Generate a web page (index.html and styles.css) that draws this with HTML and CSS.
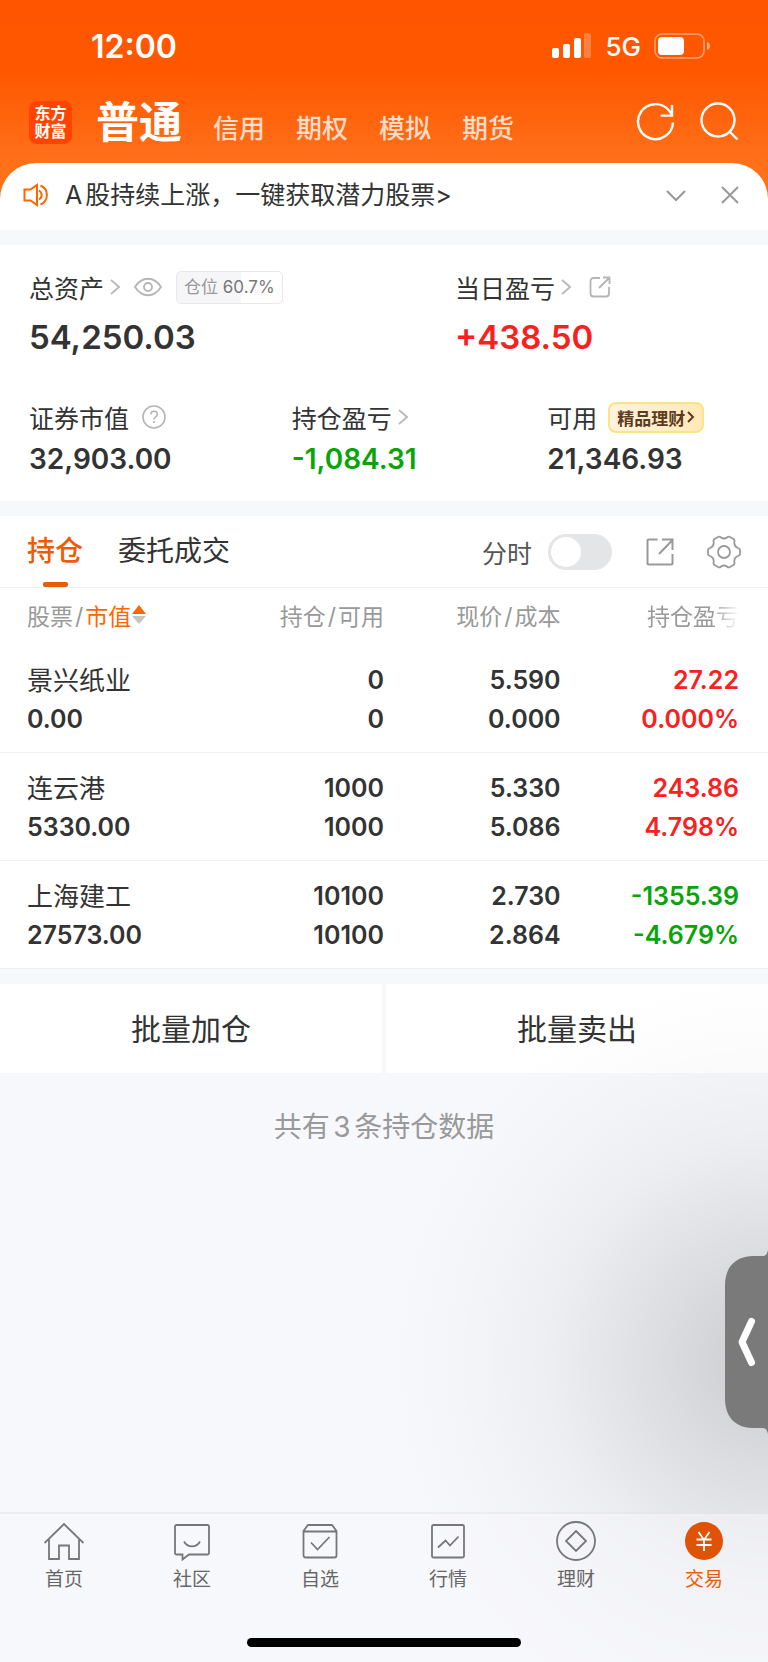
FILE: index.html
```html
<!DOCTYPE html>
<html lang="zh-CN">
<head>
  <meta charset="UTF-8">
  <meta name="viewport" content="width=device-width, initial-scale=1">
  <title>交易 - 持仓</title>
  <link rel="stylesheet" href="styles.css">
</head>
<body>
  <div class="app">
    <header class="header">
      <div class="status-bar">
        <span class="time">12:00</span>
        <div class="status-icons">
          <svg class="signal" width="40" height="26" viewBox="0 0 40 26" fill="#fff">
            <rect x="0" y="15" width="7" height="10" rx="2"/>
            <rect x="11" y="11" width="7" height="14" rx="2"/>
            <rect x="22" y="5" width="7" height="20" rx="2"/>
            <rect x="32" y="0" width="7" height="25" rx="2" opacity=".25"/>
          </svg>
          <span class="network">5G</span>
          <svg class="battery" width="57" height="26" viewBox="0 0 57 26">
            <rect x="1" y="1" width="49" height="24" rx="7" fill="none" stroke="#fff" stroke-width="1.6" opacity=".45"/>
            <rect x="4" y="4" width="26" height="18" rx="4" fill="#fff"/>
            <path d="M53 9c4 1 4 7 0 8z" fill="#fff" opacity=".5"/>
          </svg>
        </div>
      </div>
      <div class="title-bar">
        <div class="logo"><span>东方</span><span>财富</span></div>
        <nav class="account-tabs">
          <a href="#" class="active">普通</a>
          <a href="#">信用</a>
          <a href="#">期权</a>
          <a href="#">模拟</a>
          <a href="#">期货</a>
        </nav>
        <button class="icon-btn" aria-label="刷新">
          <svg width="40" height="40" viewBox="0 0 40 40" fill="none" stroke="#fff" stroke-width="2.4">
            <path d="M38 20.500A17.500 17.500 0 1 1 34 8.500L37 12.500"/>
            <path d="M37 3v10.600H25.500"/>
          </svg>
        </button>
        <button class="icon-btn" aria-label="搜索">
          <svg width="40" height="40" viewBox="0 0 40 40" fill="none" stroke="#fff" stroke-width="2.4">
            <circle cx="19" cy="18" r="16.500"/>
            <path d="M30.500 29.500L38.500 37.500"/>
          </svg>
        </button>
      </div>
    </header>

    <main class="content">
      <section class="notice">
        <svg width="26" height="24" viewBox="0 0 26 24" fill="none" stroke="#f60" stroke-width="2">
          <path d="M1.500 6.500h6L14 2v20l-6.500-4.500h-6z"/>
          <path d="M16 7.500c3.500 2 3.500 7 0 9M17.500 2.500c8.500 3.500 8.500 15.500 0 19"/>
        </svg>
        <a href="#" class="notice-text">A股持续上涨，一键获取潜力股票&gt;</a>
        <button class="icon-btn" aria-label="展开">
          <svg width="20" height="20" viewBox="0 0 20 20" fill="none" stroke="#999" stroke-width="2"><path d="M1 6l9 9 9-9"/></svg>
        </button>
        <button class="icon-btn" aria-label="关闭">
          <svg width="20" height="20" viewBox="0 0 20 20" fill="none" stroke="#999" stroke-width="2"><path d="M2 2l16 16M18 2L2 18"/></svg>
        </button>
      </section>

      <section class="assets">
        <div class="asset-row asset-row-main">
          <div class="asset">
            <div class="label">
              总资产
              <svg class="arrow" width="10" height="16" viewBox="0 0 10 16"><path d="M1 1l8 7-8 7"/></svg>
              <svg class="eye" width="28" height="20" viewBox="0 0 28 20" fill="none" stroke="#b5b5b5" stroke-width="1.800">
                <path d="M1 10C8-1 20-1 27 10 20 21 8 21 1 10z"/>
                <circle cx="14" cy="10" r="4"/>
              </svg>
              <span class="position" style="--rate: 60.7%"><span>仓位</span> 60.7%</span>
            </div>
            <div class="value">54,250.03</div>
          </div>
          <div class="asset">
            <div class="label">
              当日盈亏
              <svg class="arrow" width="10" height="16" viewBox="0 0 10 16"><path d="M1 1l8 7-8 7"/></svg>
              <svg class="share" width="22" height="22" viewBox="0 0 22 22" fill="none" stroke="#b5b5b5" stroke-width="1.800">
                <path d="M11 2H4.500A3 3 0 0 0 1.500 5v12.500a3 3 0 0 0 3 3H17a3 3 0 0 0 3-3V11M10 12L20 2M14 1.500h6.500V8"/>
              </svg>
            </div>
            <div class="value up">+438.50</div>
          </div>
        </div>
        <div class="asset-row asset-row-sub">
          <div class="asset">
            <div class="label">
              证券市值
              <svg class="help" width="24" height="24" viewBox="0 0 24 24" fill="none" stroke="#b5b5b5" stroke-width="1.600">
                <circle cx="12" cy="12" r="11"/>
                <path d="M8.800 9.500c0-4.500 6.600-4.300 6.500-.2 0 2.600-3.300 2.400-3.300 5.200M12 16v2"/>
              </svg>
            </div>
            <div class="value">32,903.00</div>
          </div>
          <div class="asset">
            <div class="label">
              持仓盈亏
              <svg class="arrow" width="10" height="16" viewBox="0 0 10 16"><path d="M1 1l8 7-8 7"/></svg>
            </div>
            <div class="value down">-1,084.31</div>
          </div>
          <div class="asset">
            <div class="label">
              可用
              <a href="#" class="promo">精品理财<svg width="8" height="12" viewBox="0 0 8 12" fill="none" stroke="#5f3a1e" stroke-width="2"><path d="M1 1l5 5-5 5"/></svg></a>
            </div>
            <div class="value">21,346.93</div>
          </div>
        </div>
      </section>

      <section class="holdings">
        <div class="toolbar">
          <a href="#" class="tab active">持仓</a>
          <a href="#" class="tab">委托成交</a>
          <label class="switch-label" for="time-share">分时</label>
          <input type="checkbox" class="switch" id="time-share">
          <button class="icon-btn" aria-label="分享">
            <svg width="30" height="30" viewBox="0 0 30 30" fill="none" stroke="#999" stroke-width="2">
              <path d="M12.500 2.500h-9a1 1 0 0 0-1 1v23a1 1 0 0 0 1 1h23a1 1 0 0 0 1-1V17M14 17L27.500 3M17 2.500h10.500V13"/>
            </svg>
          </button>
          <button class="icon-btn" aria-label="设置">
            <svg width="34" height="34" viewBox="0 0 34 34" fill="none" stroke="#999" stroke-width="1.800" stroke-linejoin="round">
              <path d="M11 2Q12.500 1 14 2.500Q17 4.500 20 2.500Q21.500 1 23 2L26.500 4Q28 5 27.300 7Q27 11.500 31 13Q33 13.500 33 15V19Q33 20.500 31 21Q27 22.500 27.300 27Q28 29 26.500 30L23 32Q21.500 33 20 31.500Q17 29.500 14 31.500Q12.500 33 11 32L7.500 30Q6 29 6.700 27Q7 22.500 3 21Q1 20.500 1 19V15Q1 13.500 3 13Q7 11.500 6.700 7Q6 5 7.500 4Z"/>
              <circle cx="17" cy="17" r="6"/>
            </svg>
          </button>
        </div>

        <table class="stocks">
          <thead>
            <tr>
              <th>股票<i>/</i><button class="sort">市值<svg width="14" height="20" viewBox="0 0 14 20"><path d="M7 0l7 9H0z" fill="#f60"/><path d="M0 11h14l-7 8z" fill="#c4c4c4"/></svg></button></th>
              <th>持仓<i>/</i>可用</th>
              <th>现价<i>/</i>成本</th>
              <th><span class="fade">持仓盈亏</span></th>
            </tr>
          </thead>
          <tbody>
            <tr>
              <td><span class="name">景兴纸业</span><span>0.00</span></td>
              <td><span>0</span><span>0</span></td>
              <td><span>5.590</span><span>0.000</span></td>
              <td class="up"><span>27.22</span><span>0.000%</span></td>
            </tr>
            <tr>
              <td><span class="name">连云港</span><span>5330.00</span></td>
              <td><span>1000</span><span>1000</span></td>
              <td><span>5.330</span><span>5.086</span></td>
              <td class="up"><span>243.86</span><span>4.798%</span></td>
            </tr>
            <tr>
              <td><span class="name">上海建工</span><span>27573.00</span></td>
              <td><span>10100</span><span>10100</span></td>
              <td><span>2.730</span><span>2.864</span></td>
              <td class="down"><span>-1355.39</span><span>-4.679%</span></td>
            </tr>
          </tbody>
        </table>
      </section>

      <div class="batch">
        <button>批量加仓</button>
        <button>批量卖出</button>
      </div>

      <p class="total">共有3条持仓数据</p>
    </main>

    <nav class="tab-bar">
      <a href="#">
        <svg width="40" height="40" viewBox="0 0 40 40"><path d="M0.500 22L20 3l19.500 19M5 18.500V38h10V24.500h10V38h10V18.500"/></svg>
        首页
      </a>
      <a href="#">
        <svg width="40" height="40" viewBox="0 0 40 40"><path d="M4.500 4h31a1.500 1.500 0 0 1 1.500 1.500V32a1.500 1.500 0 0 1-1.500 1.500H17l-6.500 5v-5h-6A1.500 1.500 0 0 1 3 32V5.500A1.500 1.500 0 0 1 4.500 4zM12 20.500c3.500 6.500 12.500 6.500 16 0"/></svg>
        社区
      </a>
      <a href="#">
        <svg width="40" height="40" viewBox="0 0 40 40"><path d="M3.500 10L8 4h24l4.500 6v24.500a2 2 0 0 1-2 2h-29a2 2 0 0 1-2-2zM3.500 10.500h33M11 21.500l6.500 7L29.500 16"/></svg>
        自选
      </a>
      <a href="#">
        <svg width="40" height="40" viewBox="0 0 40 40"><rect x="4" y="4" width="32" height="32.500" rx="1.500"/><path d="M10 26.500l7.500-7 4.500 5 8.500-9"/></svg>
        行情
      </a>
      <a href="#">
        <svg width="40" height="40" viewBox="0 0 40 40"><circle cx="20" cy="20" r="19"/><path d="M20 10l10 10-10 10-10-10z"/></svg>
        理财
      </a>
      <a href="#" class="active">
        <svg width="40" height="40" viewBox="0 0 40 40"><circle cx="20" cy="20" r="19" fill="#e05206" stroke="none"/><path d="M14.500 11l5.500 8 5.500-8M20 19v11M12.500 18.500h15M12.500 24h15" stroke="#fff"/></svg>
        交易
      </a>
    </nav>
    <div class="home-indicator"></div>

    <div class="side-shadow"></div>
    <button class="side-handle" aria-label="展开侧栏">
      <svg width="44" height="184" viewBox="0 0 44 184">
        <path d="M44 0C43 4 42 6 38 6H28C10 7 1 18 1 36V148C1 166 10 177 28 178H38C42 178 43 180 44 184Z" fill="#7a7a7b"/>
        <path d="M27.500 71.500L18 92l9.500 20.500" fill="none" stroke="#fff" stroke-width="7" stroke-linecap="round" stroke-linejoin="round"/>
      </svg>
    </button>
  </div>
</body>
</html>
```
FILE: styles.css
```css
* {
  box-sizing: border-box;
}

body {
  margin: 0;
  font-family: Inter, "Noto Sans CJK SC", sans-serif;
  font-size: 25px;
  color: #333;
  background-color: #f7f8fb;
  text-autospace: normal;
}

a {
  color: inherit;
  text-decoration: none;
}

button {
  padding: 0;
  border: none;
  background: none;
  font: inherit;
  color: inherit;
  cursor: pointer;
}

svg {
  display: block;
  flex-shrink: 0;
}

.app {
  position: relative;
  display: flex;
  flex-direction: column;
  min-height: 100vh;
  overflow: hidden;
}

.up {
  color: #fa2020;
}

.down {
  color: #08a408;
}

/* header */
.header {
  height: 208px;
  background: linear-gradient(#ff5500 0, #ff5700 70px, #ff7019 160px);
  color: #fff;
}

.status-bar {
  display: flex;
  justify-content: space-between;
  align-items: center;
  height: 92px;
  padding: 0 57px 0 91px;
}

.time {
  font-size: 32px;
  font-weight: 600;
}

.status-icons {
  display: flex;
  align-items: center;
}

.network {
  margin: 0 13px;
  font-size: 26px;
  font-weight: 500;
}

.title-bar {
  display: flex;
  align-items: center;
  gap: 24px;
  height: 60px;
  padding: 0 29px;
}

.logo {
  display: flex;
  flex-direction: column;
  align-items: center;
  justify-content: center;
  width: 43px;
  height: 43px;
  border-radius: 8px;
  background-color: #ff4400;
  font-size: 16px;
  font-weight: 700;
  line-height: 18px;
}

.account-tabs {
  display: flex;
  flex: 1;
  align-items: baseline;
  gap: 31px;
  padding-top: 6px;
  font-size: 26px;
  font-weight: 500;
  line-height: 60px;
  color: #ffdcc8;
}

.account-tabs .active {
  font-size: 43px;
  font-weight: 700;
  color: #fff;
}

/* notice */
.content {
  margin-top: -45px;
}

.notice {
  display: flex;
  align-items: center;
  gap: 34px;
  height: 67px;
  padding: 0 28px 4px 23px;
  border-radius: 36px 36px 0 0;
  background-color: #fff;
}

.notice-text {
  flex: 1;
  margin-left: -18px;
  padding-bottom: 3px;
}

/* assets */
.assets {
  margin: 15px 0;
  padding: 24px 29px;
  background-color: #fff;
}

.asset-row {
  display: grid;
}

.asset-row-main {
  grid-template-columns: 60% 40%;
}

.asset-row-sub {
  grid-template-columns: 37% 36% 27%;
  margin-top: 37px;
}

.label {
  display: flex;
  align-items: center;
  height: 36px;
  white-space: nowrap;
}

.arrow {
  margin-left: 6px;
  fill: none;
  stroke: #bbb;
  stroke-width: 2;
}

.eye {
  margin-left: 14px;
}

.share {
  margin-left: 18px;
}

.help {
  margin-left: 13px;
}

.position {
  height: 33px;
  margin-left: 14px;
  padding: 0 7px;
  border: 1px solid #e8e8ec;
  border-radius: 5px;
  background: linear-gradient(to right, #f6f6f9 var(--rate), #fff var(--rate));
  font-size: 17px;
  line-height: 31px;
  color: #777;
}

.position span {
  color: #999;
}

.value {
  margin-top: 4px;
  font-size: 28px;
  font-weight: 600;
  line-height: 40px;
}

.asset-row-main .value {
  margin-top: 7px;
  font-size: 33px;
  line-height: 50px;
}

.asset-row-sub .value {
  margin-bottom: -2px;
}

.promo {
  display: flex;
  align-items: center;
  gap: 2px;
  height: 31px;
  margin-left: 11px;
  padding: 0 7px;
  border: 2px solid #fde28a;
  border-radius: 8px;
  background: linear-gradient(to right, #fff3dc, #ffe9b8);
  font-size: 17px;
  font-weight: 700;
  color: #5f3a1e;
}

/* holdings */
.holdings {
  background-color: #fff;
}

.toolbar {
  display: flex;
  align-items: center;
  height: 72px;
  padding: 0 27px;
  border-bottom: 1px solid #f0f0f2;
}

.tab {
  position: relative;
  margin-right: 35px;
  font-size: 28px;
  line-height: 71px;
}

.tab.active {
  font-weight: 500;
  color: #f05a00;
}

.tab.active::after {
  content: "";
  position: absolute;
  bottom: 0;
  left: 50%;
  width: 25px;
  height: 5px;
  margin-left: -12px;
  border-radius: 2px;
  background-color: #f05a00;
}

.switch-label {
  margin-left: auto;
  color: #555;
}

.switch {
  appearance: none;
  width: 64px;
  height: 36px;
  margin: 0 33px 0 16px;
  padding: 3px;
  border-radius: 18px;
  background-color: #e4e5e7;
}

.switch::before {
  content: "";
  display: block;
  width: 30px;
  height: 30px;
  border-radius: 50%;
  background-color: #fff;
}

.switch:checked {
  background-color: #f05a00;
}

.switch:checked::before {
  margin-left: auto;
}

.toolbar .icon-btn + .icon-btn {
  margin-left: 32px;
}

.stocks {
  width: 100%;
  table-layout: fixed;
  border-collapse: collapse;
  text-align: right;
}

.stocks th {
  width: 23%;
  height: 57px;
  padding: 0 0 4px;
  font-size: 23px;
  font-weight: 400;
  color: #999;
}

.stocks th:first-child,
.stocks th:last-child {
  width: 27%;
}

.stocks th:first-child,
.stocks td:first-child {
  padding-left: 27px;
  text-align: left;
}

.stocks th:last-child,
.stocks td:last-child {
  padding-right: 29px;
}

.stocks th i {
  margin: 0 2px;
  font-style: normal;
}

.sort {
  display: inline-flex;
  align-items: center;
  gap: 1px;
  color: #f60;
}

.fade {
  -webkit-mask-image: linear-gradient(to right, #000 70%, transparent);
  mask-image: linear-gradient(to right, #000 70%, transparent);
}

.stocks td {
  padding: 16px 0 13px;
  border-bottom: 1px solid #f0f0f2;
  font-weight: 600;
  line-height: 39px;
}

.stocks td span {
  display: block;
  height: 39px;
}

.stocks .name {
  font-size: 26px;
  font-weight: 400;
}

/* batch actions */
.batch {
  display: flex;
  gap: 4px;
  margin-top: 15px;
}

.batch button {
  flex: 1;
  height: 89px;
  padding-bottom: 4px;
  background-color: #fff;
  font-size: 30px;
}

.total {
  margin: 34px 0;
  font-size: 28px;
  line-height: 40px;
  text-align: center;
  color: #999;
}

/* bottom bar */
.tab-bar {
  position: relative;
  z-index: 2;
  display: flex;
  height: 150px;
  margin-top: auto;
  border-top: 2px solid rgba(0, 0, 0, 0.04);
  background-color: rgba(248, 248, 251, 0.5);
  font-size: 19px;
  line-height: 24px;
  color: #666;
}

.tab-bar a {
  display: flex;
  flex: 1;
  flex-direction: column;
  align-items: center;
  gap: 7px;
  padding-top: 7px;
}

.tab-bar svg {
  fill: none;
  stroke: #777;
  stroke-width: 1.8;
}

.tab-bar .active {
  color: #f05a00;
}

.home-indicator {
  position: absolute;
  z-index: 3;
  bottom: 15px;
  left: 50%;
  width: 274px;
  height: 9px;
  margin-left: -137px;
  border-radius: 5px;
  background-color: #000;
}

/* floating side panel handle */
.side-shadow {
  position: absolute;
  z-index: 1;
  right: 0;
  bottom: 0;
  width: 400px;
  height: 700px;
  background: radial-gradient(ellipse 380px 390px at 100% 57%, rgba(0, 0, 0, 0.18), rgba(0, 0, 0, 0.11) 28%, rgba(0, 0, 0, 0.04) 58%, rgba(0, 0, 0, 0.01) 82%, transparent);
  pointer-events: none;
}

.side-handle {
  position: absolute;
  z-index: 2;
  right: 0;
  bottom: 228px;
}
```
